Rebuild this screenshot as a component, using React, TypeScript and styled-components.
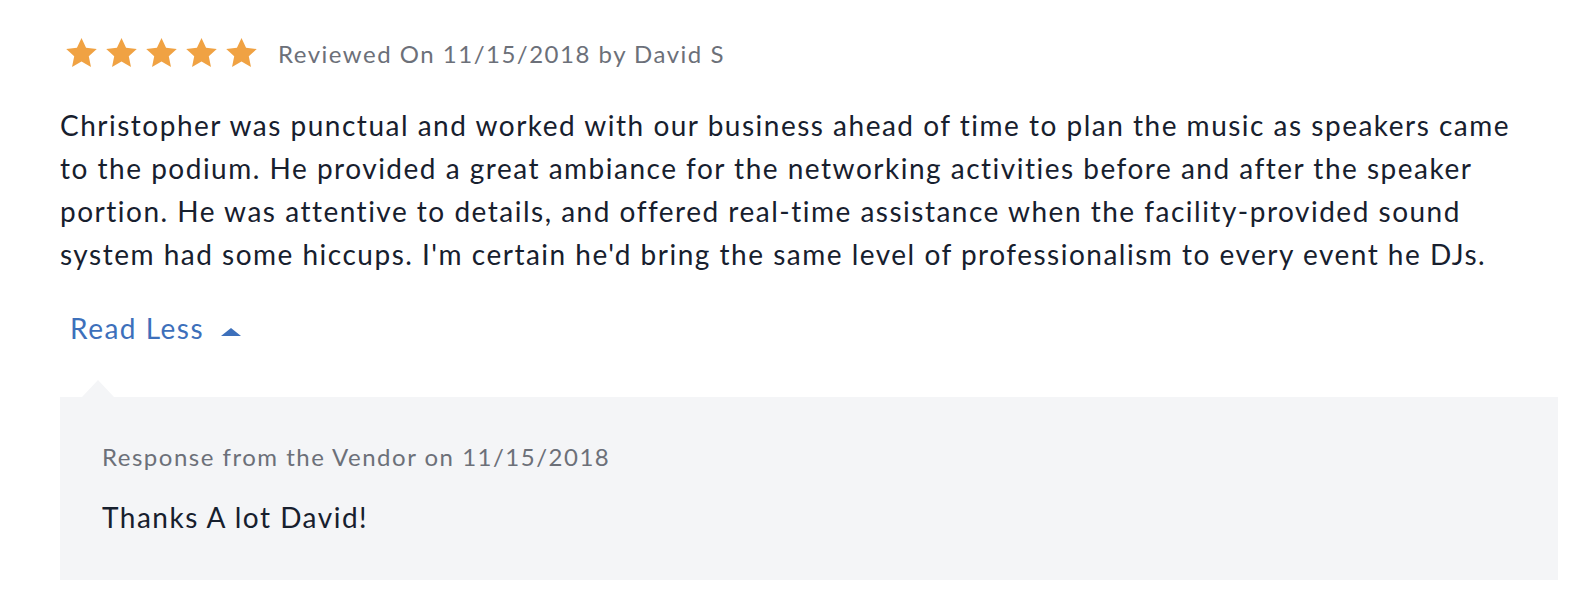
import React from 'react';
import styled, { createGlobalStyle } from 'styled-components';

const GlobalStyle = createGlobalStyle`
  html, body {
    margin: 0;
    padding: 0;
    background: #ffffff;
  }
  body {
    font-family: Lato, 'Open Sans', 'Liberation Sans', sans-serif;
    font-variant-ligatures: none;
    letter-spacing: 1.5px;
    -webkit-font-smoothing: antialiased;
  }
`;

const review = {
  rating: 5,
  date: '11/15/2018',
  author: 'David S',
  text:
    "Christopher was punctual and worked with our business ahead of time to plan the music as speakers came to the podium. He provided a great ambiance for the networking activities before and after the speaker portion. He was attentive to details, and offered real-time assistance when the facility-provided sound system had some hiccups. I'm certain he'd bring the same level of professionalism to every event he DJs.",
  response: {
    date: '11/15/2018',
    text: 'Thanks A lot David!',
  },
};

function Star() {
  return (
    <svg width="33" height="32" viewBox="0 0 24 23" aria-hidden="true">
      <path
        d="M12 0.6l3.3 7.1 7.8 0.9-5.8 5.3 1.6 7.7L12 17.7l-6.9 3.9 1.6-7.7L0.9 8.6l7.8-0.9z"
        fill="#f0a243"
      />
    </svg>
  );
}

function App() {
  return (
    <>
      <GlobalStyle />
      <Wrapper>
        <MetaRow>
          <Stars>
            {Array.from({ length: review.rating }).map((_, i) => (
              <Star key={i} />
            ))}
          </Stars>
          <Meta>
            Reviewed On {review.date} by {review.author}
          </Meta>
        </MetaRow>
        <Body>{review.text}</Body>
        <ReadLess>
          Read Less
          <Caret />
        </ReadLess>
        <Response>
          <ResponseMeta>Response from the Vendor on {review.response.date}</ResponseMeta>
          <ResponseText>{review.response.text}</ResponseText>
        </Response>
      </Wrapper>
    </>
  );
}

const Wrapper = styled.section`
  width: 1498px;
  padding: 37px 0 0 60px;
`;

const MetaRow = styled.div`
  display: flex;
  align-items: center;
  height: 32px;
`;

const Stars = styled.div`
  display: flex;
  gap: 7px;
  margin-left: 5px;
  margin-right: 20px;
`;

const Meta = styled.span`
  font-size: 24px;
  font-weight: 400;
  line-height: 32px;
  color: #6c7079;
  margin-top: 2px;
`;

const Body = styled.p`
  margin: 35px 0 0 0;
  padding-right: 36px;
  font-size: 28px;
  font-weight: 400;
  line-height: 43px;
  color: #17202e;
`;

const ReadLess = styled.button`
  display: flex;
  align-items: center;
  margin: 43px 0 0 0;
  padding: 0 0 0 10px;
  border: none;
  background: none;
  font-family: inherit;
  font-size: 28px;
  line-height: 14px;
  letter-spacing: 1.5px;
  color: #3d70bb;
  cursor: pointer;
`;

const Caret = styled.span`
  width: 0;
  height: 0;
  margin: 9px 0 0 17px;
  border-left: 10px solid transparent;
  border-right: 10px solid transparent;
  border-bottom: 8px solid #3d70bb;
`;

const Response = styled.div`
  position: relative;
  margin-top: 61px;
  padding: 44px 42px 45px 42px;
  background: #f4f5f7;

  &::before {
    content: '';
    position: absolute;
    top: -17px;
    left: 22px;
    border-left: 16px solid transparent;
    border-right: 16px solid transparent;
    border-bottom: 17px solid #f4f5f7;
  }
`;

const ResponseMeta = styled.div`
  font-size: 24px;
  line-height: 32px;
  color: #6c7079;
`;

const ResponseText = styled.div`
  margin-top: 26px;
  font-size: 28px;
  line-height: 36px;
  color: #17202e;
`;

export default App;
